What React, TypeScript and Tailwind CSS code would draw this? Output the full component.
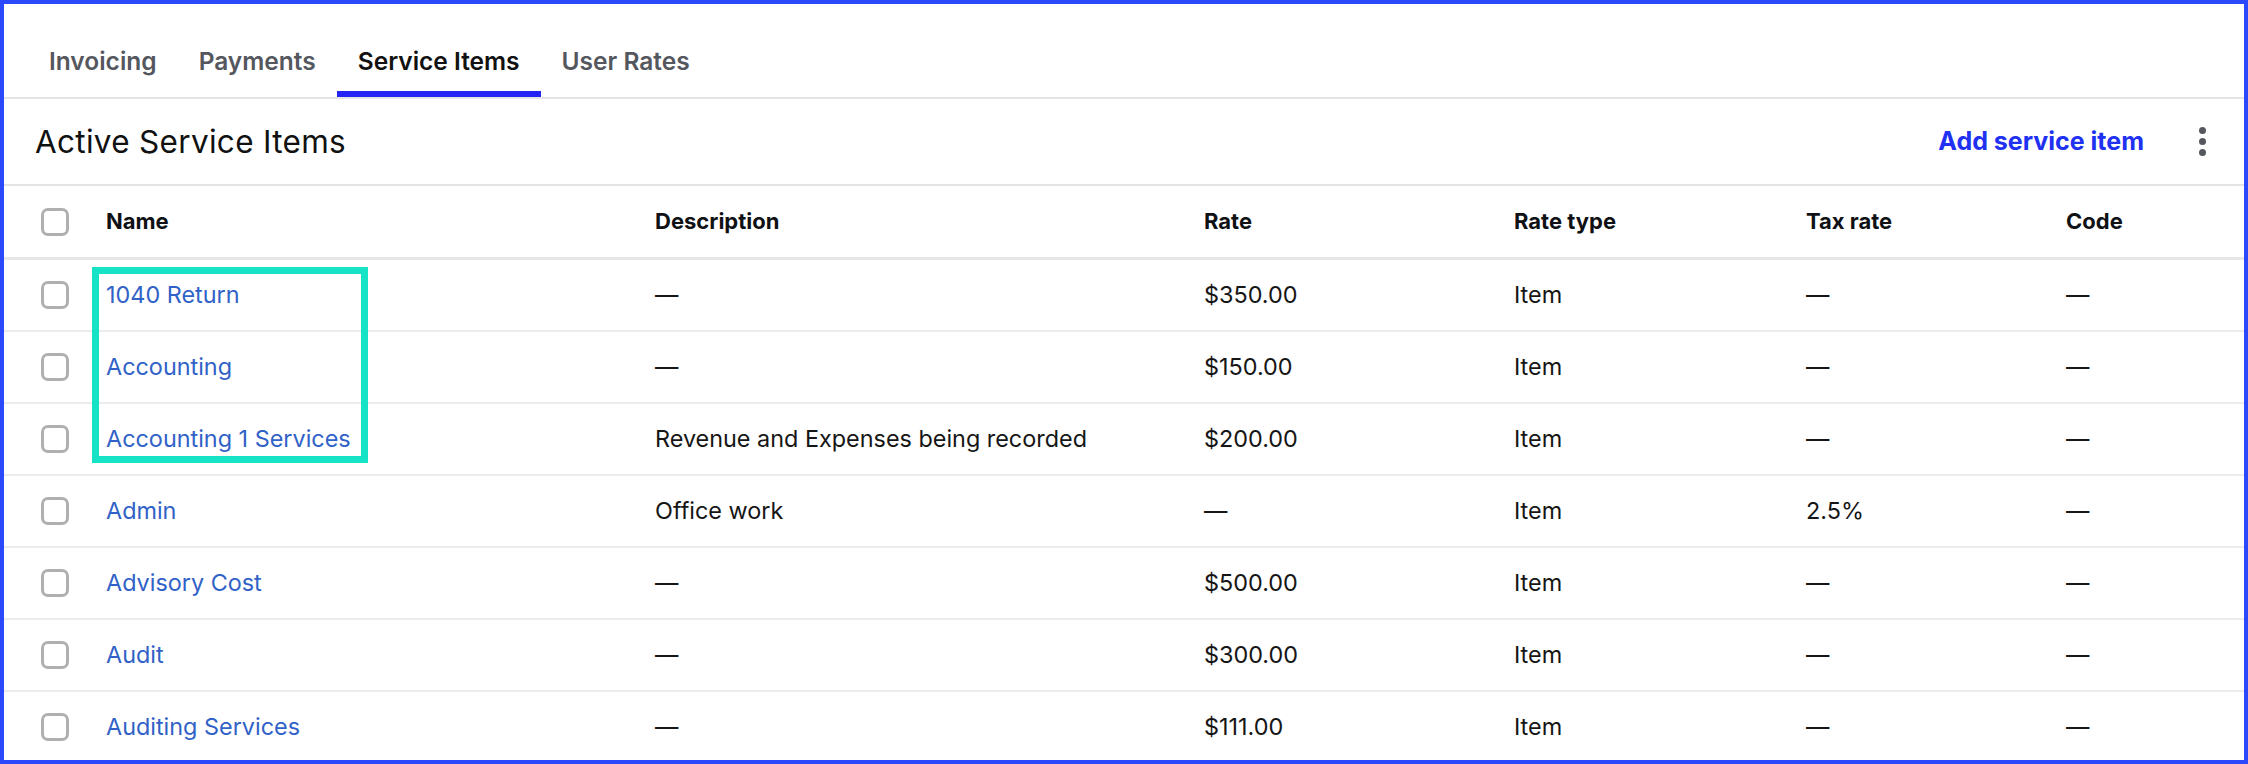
import { useState } from "react";

type ServiceItem = {
  name: string;
  description: string;
  rate: string;
  rateType: string;
  taxRate: string;
  code: string;
};

const TABS = ["Invoicing", "Payments", "Service Items", "User Rates"];

const ITEMS: ServiceItem[] = [
  { name: "1040 Return", description: "—", rate: "$350.00", rateType: "Item", taxRate: "—", code: "—" },
  { name: "Accounting", description: "—", rate: "$150.00", rateType: "Item", taxRate: "—", code: "—" },
  { name: "Accounting 1 Services", description: "Revenue and Expenses being recorded", rate: "$200.00", rateType: "Item", taxRate: "—", code: "—" },
  { name: "Admin", description: "Office work", rate: "—", rateType: "Item", taxRate: "2.5%", code: "—" },
  { name: "Advisory Cost", description: "—", rate: "$500.00", rateType: "Item", taxRate: "—", code: "—" },
  { name: "Audit", description: "—", rate: "$300.00", rateType: "Item", taxRate: "—", code: "—" },
  { name: "Auditing Services", description: "—", rate: "$111.00", rateType: "Item", taxRate: "—", code: "—" },
];

const GRID = "grid grid-cols-[102px_549px_549px_310px_292px_260px_1fr] items-center";

function Checkbox() {
  return <div className="ml-[37px] h-[28px] w-[28px] rounded-[7px] border-[3px] border-[#b0b0b0] bg-white" />;
}

export default function App() {
  const [activeTab, setActiveTab] = useState("Service Items");

  return (
    <div
      className="relative h-[764px] w-full overflow-hidden border-4 border-[#2c48fb] bg-white text-[#161616]"
      style={{ fontFamily: "Inter, 'Liberation Sans', sans-serif" }}
    >
      {/* Tabs */}
      <div className="flex h-[95px] items-end border-b-2 border-[#e4e4e4] pl-[24px]">
        {TABS.map((tab) => (
          <button
            key={tab}
            onClick={() => setActiveTab(tab)}
            className={
              tab === activeTab
                ? "flex h-[95px] flex-col justify-between text-[24.5px] font-semibold text-[#111111]"
                : "flex h-[95px] flex-col justify-between text-[24.5px] font-semibold text-[#55575e]"
            }
          >
            <span className="px-[21px] pt-[41px] leading-[36px]">{tab}</span>
            <span className={tab === activeTab ? "h-[6px] w-full bg-[#2323f6]" : "h-[6px] w-full"} />
          </button>
        ))}
      </div>

      {/* Section header */}
      <div className="flex h-[87px] items-center justify-between border-b-2 border-[#e4e4e4] pl-[31px] pr-[38px]">
        <h1 className="text-[31.5px] font-normal tracking-[0.3px] text-[#111111]">Active Service Items</h1>
        <div className="flex items-center gap-[55px]">
          <button className="text-[25px] font-bold text-[#2131f2]">Add service item</button>
          <div className="flex flex-col items-center gap-[4px]">
            <span className="h-[7px] w-[7px] rounded-full bg-[#55575e]" />
            <span className="h-[7px] w-[7px] rounded-full bg-[#55575e]" />
            <span className="h-[7px] w-[7px] rounded-full bg-[#55575e]" />
          </div>
        </div>
      </div>

      {/* Table header */}
      <div className={`${GRID} h-[74px] border-b-[3px] border-[#e6e6e6] text-[22px] font-bold text-[#0f1115]`}>
        <Checkbox />
        <div>Name</div>
        <div>Description</div>
        <div>Rate</div>
        <div>Rate type</div>
        <div>Tax rate</div>
        <div>Code</div>
      </div>

      {/* Rows */}
      {ITEMS.map((item) => (
        <div key={item.name} className={`${GRID} h-[72px] border-b-2 border-[#ececec] text-[23.4px]`}>
          <Checkbox />
          <div className="text-[#3162c7]">{item.name}</div>
          <div>{item.description}</div>
          <div>{item.rate}</div>
          <div>{item.rateType}</div>
          <div>{item.taxRate}</div>
          <div>{item.code}</div>
        </div>
      ))}

      {/* Highlight annotation */}
      <div className="pointer-events-none absolute left-[88px] top-[263px] h-[196px] w-[276px] border-[7px] border-[#16e3c6]" />
    </div>
  );
}
